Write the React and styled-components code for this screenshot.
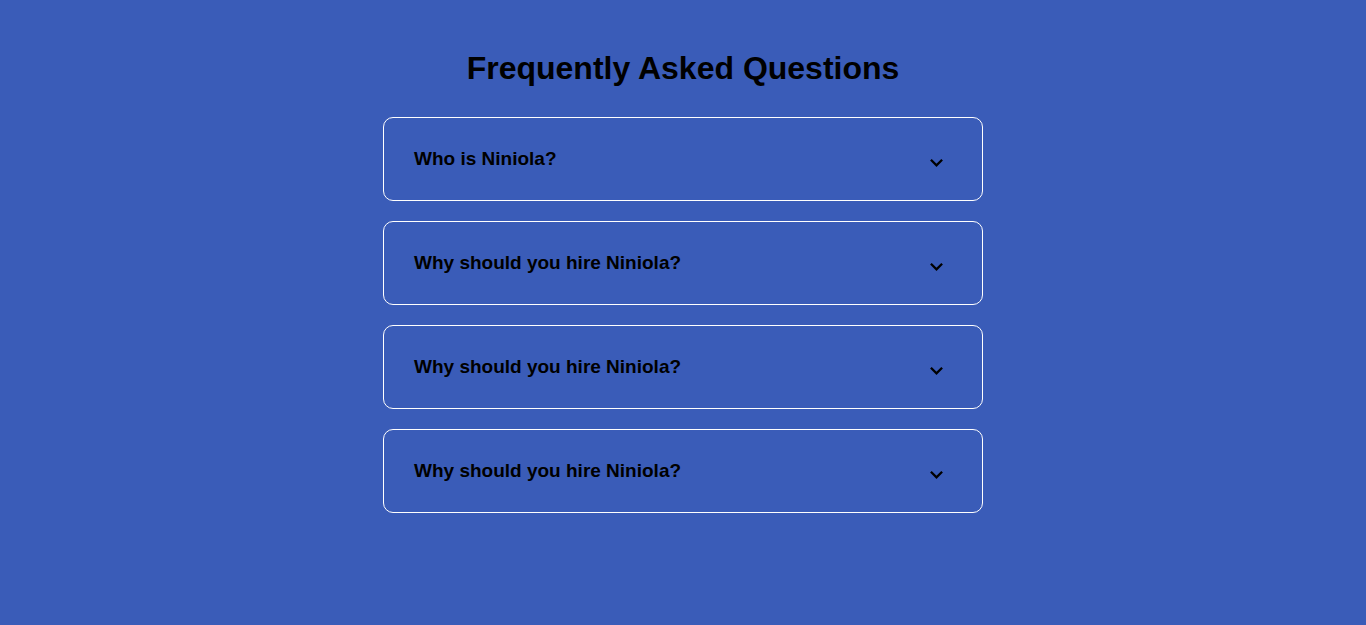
import React, { useState } from "react";
import styled, { createGlobalStyle } from "styled-components";

const GlobalStyle = createGlobalStyle`
  *, *::before, *::after {
    box-sizing: border-box;
  }
  body {
    margin: 0;
    background: #3a5cb8;
    color: #000;
    font-family: Arial, "Liberation Sans", sans-serif;
  }
`;

const Page = styled.main`
  min-height: 100vh;
  padding: 50px 20px;
`;

const Title = styled.h1`
  margin: 0 0 31px;
  font-size: 32px;
  line-height: 36px;
  text-align: center;
`;

const FaqList = styled.div`
  display: flex;
  flex-direction: column;
  gap: 20px;
  max-width: 600px;
  margin: 0 auto;
`;

const FaqItem = styled.section`
  border: 1px solid #fff;
  border-radius: 10px;
`;

const Question = styled.h2`
  margin: 0;
  font-size: 19px;
  line-height: 22px;
`;

const Toggle = styled.button`
  display: flex;
  align-items: flex-end;
  justify-content: space-between;
  width: 100%;
  padding: 30px 36px 30px 30px;
  border: 0;
  background: transparent;
  color: inherit;
  font: inherit;
  text-align: left;
  cursor: pointer;
`;

const Chevron = styled.svg`
  flex: none;
  width: 20px;
  height: 16px;
  fill: none;
  stroke: currentColor;
  stroke-width: 2.3;
  transform: ${({ $open }) => ($open ? "rotate(180deg)" : "none")};
`;

const Answer = styled.p`
  margin: 0;
  padding: 0 30px 30px;
  font-size: 16px;
  line-height: 24px;
`;

const faqs = [
  { question: "Who is Niniola?", answer: "" },
  { question: "Why should you hire Niniola?", answer: "" },
  { question: "Why should you hire Niniola?", answer: "" },
  { question: "Why should you hire Niniola?", answer: "" },
];

function Faq({ question, answer }) {
  const [open, setOpen] = useState(false);
  return (
    <FaqItem>
      <Question>
        <Toggle type="button" aria-expanded={open} onClick={() => setOpen(!open)}>
          {question}
          <Chevron $open={open} viewBox="0 0 20 16" aria-hidden="true">
            <path d="M4.9 5.8 10.5 11.4 16.1 5.8" />
          </Chevron>
        </Toggle>
      </Question>
      {open && <Answer>{answer}</Answer>}
    </FaqItem>
  );
}

export default function App() {
  return (
    <>
      <GlobalStyle />
      <Page>
        <Title>Frequently Asked Questions</Title>
        <FaqList>
          {faqs.map((faq, index) => (
            <Faq key={index} {...faq} />
          ))}
        </FaqList>
      </Page>
    </>
  );
}
